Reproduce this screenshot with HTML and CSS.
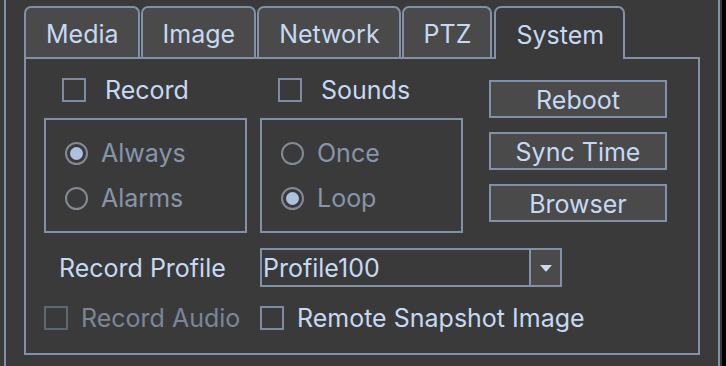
FILE: index.html
```html
<!DOCTYPE html>
<html lang="en">
<head>
    <meta charset="UTF-8">
    <meta name="viewport" content="width=device-width, initial-scale=1.0">
    <title>System Settings</title>
    <link rel="stylesheet" href="styles.css">
</head>
<body>

    <div class="screen">
        <div class="frame">
            <div class="tab-bar">
                <div class="tab">Media</div>
                <div class="tab">Image</div>
                <div class="tab">Network</div>
                <div class="tab">PTZ</div>
                <div class="tab active">System</div>
            </div>

            <div class="pane">
                <div class="top">
                    <div class="col">
                        <div class="check"><span class="box"></span>Record</div>
                        <div class="group">
                            <div class="radio on"><span class="dot"></span>Always</div>
                            <div class="radio"><span class="dot"></span>Alarms</div>
                        </div>
                    </div>

                    <div class="col col-second">
                        <div class="check"><span class="box"></span>Sounds</div>
                        <div class="group">
                            <div class="radio"><span class="dot"></span>Once</div>
                            <div class="radio on"><span class="dot"></span>Loop</div>
                        </div>
                    </div>

                    <div class="buttons">
                        <button class="btn">Reboot</button>
                        <button class="btn">Sync Time</button>
                        <button class="btn">Browser</button>
                    </div>
                </div>

                <div class="profile-row">
                    <div class="profile-label">Record Profile</div>
                    <div class="combo">
                        <span class="combo-text">Profile100</span>
                        <span class="combo-btn">
                            <svg width="14" height="8" viewBox="0 0 14 8"><path d="M1 1 H13 L7.6 7.2 Q7 7.8 6.4 7.2 Z" fill="#c9daf2"/></svg>
                        </span>
                    </div>
                </div>

                <div class="bottom-row">
                    <div class="check disabled"><span class="box"></span>Record Audio</div>
                    <div class="check"><span class="box"></span>Remote Snapshot Image</div>
                </div>
            </div>
        </div>
        <div class="edge"></div>
    </div>

</body>
</html>
```

FILE: styles.css
```css
*, *::before, *::after {
    box-sizing: border-box;
    margin: 0;
    padding: 0;
}

body {
    background: #3a3a3a;
    font-family: Inter, "Liberation Sans", Arial, sans-serif;
    font-size: 25px;
    color: #c6d9f3;
    overflow: hidden;
}

.screen {
    display: flex;
    height: 366px;
}

.frame {
    margin-left: 4px;
    width: 716px;
    border-left: 2px solid #8192a8;
    border-right: 2px solid #8192a8;
    padding: 6px 18px 0 18px;
}

.edge {
    margin-left: 2px;
    width: 4px;
    background: #000;
}

/* tabs */

.tab-bar {
    display: flex;
    align-items: flex-start;
    gap: 1px;
    height: 51px;
    position: relative;
    z-index: 1;
}

.tab {
    height: 51px;
    min-width: 90px;
    padding: 2px 19px 0 20px;
    display: flex;
    align-items: center;
    justify-content: center;
    background: #4a4a4a;
    border: 2px solid #8192a8;
    border-bottom: none;
    border-radius: 7px 7px 0 0;
}

.tab.active {
    height: 53px;
    margin-left: 1px;
    background: #3a3a3a;
}

.pane {
    height: 298px;
    border: 2px solid #8192a8;
    padding: 19px 0 0 18px;
}

/* top section */

.top {
    display: flex;
}

.col {
    width: 203px;
}

.col-second {
    margin-left: 13px;
}

.check {
    display: flex;
    align-items: center;
    gap: 19px;
    height: 24px;
    padding-left: 18px;
}

.check.disabled {
    color: #7b8697;
}

.box {
    width: 24px;
    height: 24px;
    border: 2px solid #7d8ca2;
    background: #3a3a3a;
}

.check.disabled .box {
    border-color: #5f6773;
}

.group {
    margin-top: 16px;
    height: 115px;
    border: 2px solid #8192a8;
    padding: 21px 19px;
    display: flex;
    flex-direction: column;
    gap: 21px;
}

.radio {
    display: flex;
    align-items: center;
    gap: 13px;
    height: 24px;
    color: #8795a9;
}

.dot {
    width: 23px;
    height: 23px;
    border-radius: 50%;
    border: 2px solid #838a95;
    display: flex;
    align-items: center;
    justify-content: center;
}

.radio.on .dot::after {
    content: "";
    width: 13px;
    height: 13px;
    border-radius: 50%;
    background: #abc1df;
}

.buttons {
    margin-left: 26px;
    margin-top: 2px;
    width: 178px;
    display: flex;
    flex-direction: column;
    gap: 14px;
}

.btn {
    height: 38px;
    background: #4a4a4a;
    border: 2px solid #8192a8;
    color: #c6d9f3;
    font: inherit;
    padding-top: 1px;
}

/* record profile */

.profile-row {
    margin-top: 15px;
    display: flex;
    align-items: center;
    height: 39px;
}

.profile-label {
    width: 216px;
    padding-left: 15px;
}

.combo {
    width: 302px;
    height: 39px;
    border: 2px solid #8192a8;
    display: flex;
}

.combo-text {
    flex: 1;
    padding-left: 1px;
    display: flex;
    align-items: center;
}

.combo-btn {
    width: 31px;
    border-left: 2px solid #8192a8;
    background: #4a4a4a;
    display: flex;
    align-items: center;
    justify-content: center;
}

/* bottom checks */

.bottom-row {
    margin-top: 19px;
    display: flex;
}

.bottom-row .check {
    padding-left: 0;
    gap: 13px;
}

.bottom-row .check:first-child {
    width: 216px;
}
```
